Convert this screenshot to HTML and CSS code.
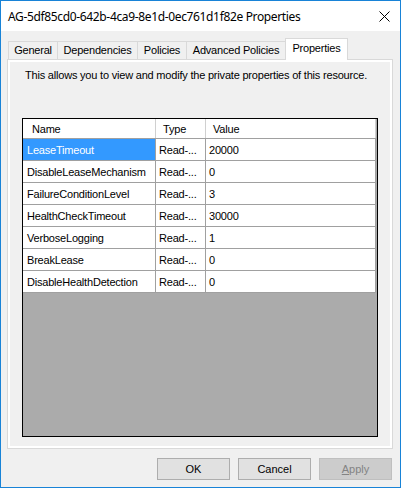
FILE: index.html
```html
<!DOCTYPE html>
<html>
<head>
<meta charset="utf-8">
<link rel="stylesheet" href="styles.css">
</head>
<body>
<div class="window">
  <div class="titlebar">
    <span class="title">AG-5df85cd0-642b-4ca9-8e1d-0ec761d1f82e Properties</span>
    <svg class="close" width="11" height="11" viewBox="0 0 11 11"><path d="M0.5 0.5L10.5 10.5M10.5 0.5L0.5 10.5" stroke="#000" stroke-width="1" fill="none"/></svg>
  </div>
  <div class="tabs">
    <div class="tab tab-general">General</div>
    <div class="tab tab-deps">Dependencies</div>
    <div class="tab tab-policies">Policies</div>
    <div class="tab tab-adv">Advanced Policies</div>
    <div class="tab tab-props active">Properties</div>
  </div>
  <div class="panel">
    <div class="page">
      <p class="desc">This allows you to view and modify the private properties of this resource.</p>
      <div class="grid">
        <div class="row header">
          <div class="cell c-name">Name</div>
          <div class="cell c-type">Type</div>
          <div class="cell c-value">Value</div>
        </div>
        <div class="row">
          <div class="cell c-name selected">LeaseTimeout</div>
          <div class="cell c-type">Read-...</div>
          <div class="cell c-value">20000</div>
        </div>
        <div class="row">
          <div class="cell c-name">DisableLeaseMechanism</div>
          <div class="cell c-type">Read-...</div>
          <div class="cell c-value">0</div>
        </div>
        <div class="row">
          <div class="cell c-name">FailureConditionLevel</div>
          <div class="cell c-type">Read-...</div>
          <div class="cell c-value">3</div>
        </div>
        <div class="row">
          <div class="cell c-name">HealthCheckTimeout</div>
          <div class="cell c-type">Read-...</div>
          <div class="cell c-value">30000</div>
        </div>
        <div class="row">
          <div class="cell c-name">VerboseLogging</div>
          <div class="cell c-type">Read-...</div>
          <div class="cell c-value">1</div>
        </div>
        <div class="row">
          <div class="cell c-name">BreakLease</div>
          <div class="cell c-type">Read-...</div>
          <div class="cell c-value">0</div>
        </div>
        <div class="row">
          <div class="cell c-name">DisableHealthDetection</div>
          <div class="cell c-type">Read-...</div>
          <div class="cell c-value">0</div>
        </div>
      </div>
    </div>
  </div>
  <div class="buttons">
    <div class="btn">OK</div>
    <div class="btn">Cancel</div>
    <div class="btn disabled"><u>A</u>pply</div>
  </div>
</div>
</body>
</html>
```
FILE: styles.css
```css
html, body {
  margin: 0;
  padding: 0;
}
body {
  background: #ffffff;
  font-family: "Liberation Sans", Arial, sans-serif;
  font-size: 11px;
  color: #000000;
}
.window {
  width: 401px;
  height: 488px;
  box-sizing: border-box;
  border: 1px solid #1883d7;
  background: #f0f0f0;
  display: flex;
  flex-direction: column;
}
.titlebar {
  flex: none;
  height: 30px;
  background: #ffffff;
  display: flex;
  align-items: center;
  justify-content: space-between;
  padding: 0 10px 0 7px;
}
.title {
  font-family: "Noto Sans", "Open Sans", sans-serif;
  font-size: 12px;
  letter-spacing: -0.35px;
  line-height: 16px;
  color: #000000;
  padding-top: 1px;
}
.close {
  display: block;
}
.tabs {
  flex: none;
  height: 28px;
  display: flex;
  align-items: flex-end;
  padding-left: 7px;
  position: relative;
  z-index: 1;
}
.tab {
  box-sizing: border-box;
  height: 18px;
  border: 1px solid #d9d9d9;
  border-bottom: none;
  background: #f0f0f0;
  margin-right: -1px;
  text-align: center;
  line-height: 16px;
  letter-spacing: -0.2px;
  white-space: nowrap;
}
.tab-general { width: 50px; }
.tab-deps { width: 81px; }
.tab-policies { width: 50px; }
.tab-adv { width: 100px; }
.tab-props { width: 63px; }
.tab.active {
  height: 22px;
  background: #ffffff;
  margin-bottom: -1px;
  padding-top: 1px;
}
.panel {
  flex: none;
  height: 390px;
  box-sizing: border-box;
  margin: 0 7px 0 6px;
  border: 1px solid #d9d9d9;
  background: #ffffff;
  padding: 2px;
}
.page {
  height: 100%;
  box-sizing: border-box;
  background: #f0f0f0;
  padding: 5px 0 0 12px;
  display: flex;
  flex-direction: column;
}
.desc {
  margin: 0 0 35px 3px;
  line-height: 16px;
  letter-spacing: -0.2px;
  white-space: nowrap;
}
.grid {
  width: 356px;
  height: 319px;
  box-sizing: border-box;
  border: 1px solid #000000;
  background: #ababab;
}
.row {
  display: flex;
  width: 353px;
  height: 22px;
  box-sizing: border-box;
  border-bottom: 1px solid #a0a0a0;
  background: #ffffff;
}
.row.header {
  height: 20px;
}
.cell {
  box-sizing: border-box;
  border-right: 1px solid #a0a0a0;
  padding: 2px 0 0 4px;
  line-height: 19px;
  white-space: nowrap;
  overflow: hidden;
  letter-spacing: -0.2px;
}
.header .cell {
  padding-top: 1px;
  border-right-color: #d0d0d0;
}
.c-name { width: 133px; }
.c-type { width: 50px; padding-left: 3px; }
.c-value { width: 170px; padding-left: 3px; }
.header .c-name { padding-left: 9px; }
.header .c-type { padding-left: 7px; }
.header .c-value { padding-left: 7px; }
.cell.selected {
  background: #3399ff;
  color: #ffffff;
}
.buttons {
  flex: none;
  display: flex;
  justify-content: flex-end;
  gap: 8px;
  margin-top: 9px;
  padding-right: 8px;
}
.btn {
  box-sizing: border-box;
  width: 73px;
  height: 22px;
  border: 1px solid #adadad;
  background: #e1e1e1;
  text-align: center;
  line-height: 20px;
}
.btn.disabled {
  border-color: #bfbfbf;
  background: #cccccc;
  color: #838383;
}
```
